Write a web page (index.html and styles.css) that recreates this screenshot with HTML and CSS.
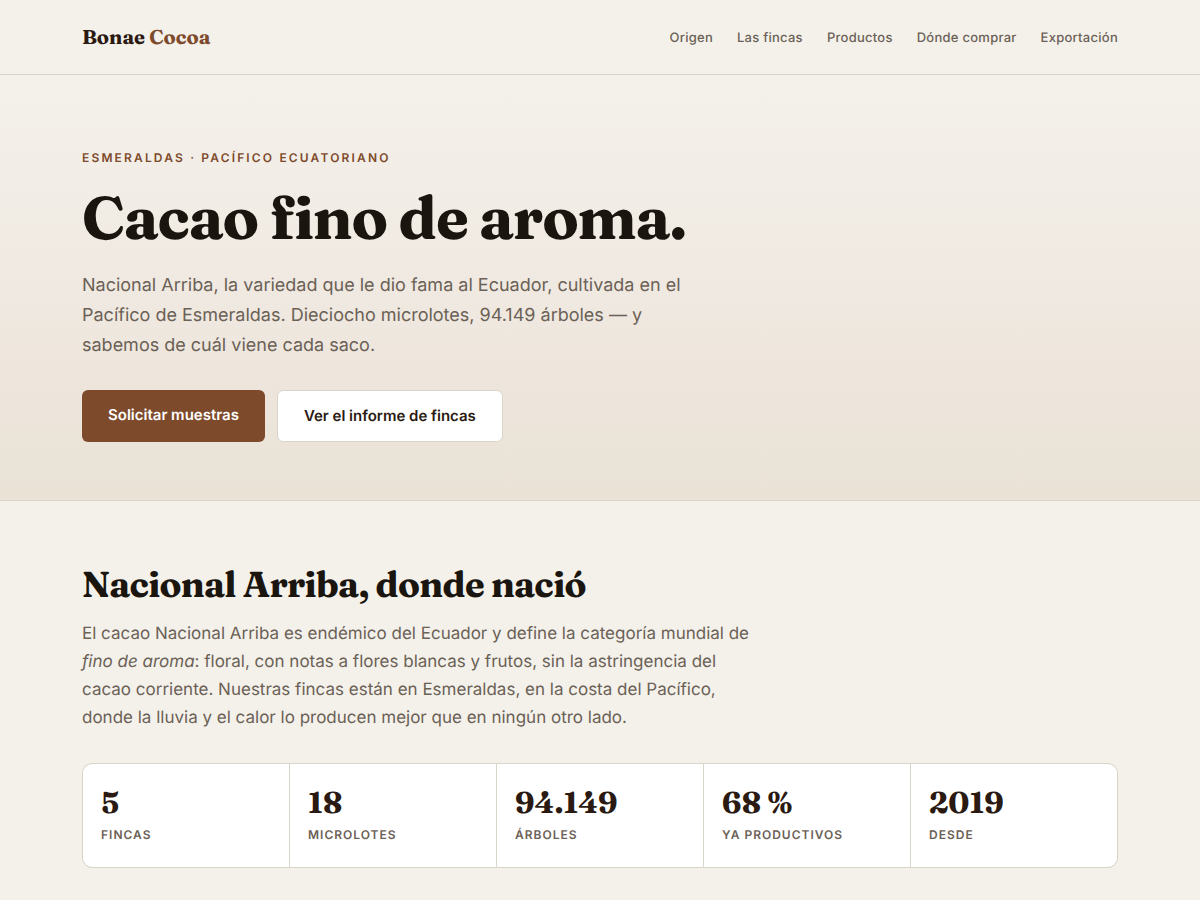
FILE: index.html
```html
<!DOCTYPE html>
<html lang="es">
<head>
<meta charset="utf-8">
<meta name="viewport" content="width=device-width, initial-scale=1">
<title>Bonae Cocoa</title>
<link rel="stylesheet" href="styles.css">
</head>
<body>
<header class="site-header">
  <div class="container header-row">
    <a class="brand" href="#inicio">Bonae <span class="brand-accent">Cocoa</span></a>
    <nav class="nav">
      <a href="#origen">Origen</a>
      <a href="#fincas">Las fincas</a>
      <a href="#productos">Productos</a>
      <a href="#comprar">Dónde comprar</a>
      <a href="#exportacion">Exportación</a>
    </nav>
  </div>
</header>
<main>
  <section class="hero" id="inicio">
    <div class="container">
      <p class="eyebrow">Esmeraldas · Pacífico ecuatoriano</p>
      <h1 class="hero-title">Cacao fino de aroma.</h1>
      <p class="hero-text">Nacional Arriba, la variedad que le dio fama al Ecuador, cultivada en el Pacífico de Esmeraldas. Dieciocho microlotes, 94.149 árboles — y sabemos de cuál viene cada saco.</p>
      <div class="actions">
        <a class="button button-primary" href="#muestras">Solicitar muestras</a>
        <a class="button button-secondary" href="#informe">Ver el informe de fincas</a>
      </div>
    </div>
  </section>
  <section class="origin" id="origen">
    <div class="container">
      <h2 class="section-title">Nacional Arriba, donde nació</h2>
      <p class="section-text">El cacao Nacional Arriba es endémico del Ecuador y define la categoría mundial de <em>fino de aroma</em>: floral, con notas a flores blancas y frutos, sin la astringencia del cacao corriente. Nuestras fincas están en Esmeraldas, en la costa del Pacífico, donde la lluvia y el calor lo producen mejor que en ningún otro lado.</p>
      <ul class="stats">
        <li class="stat"><span class="stat-value">5</span><span class="stat-label">Fincas</span></li>
        <li class="stat"><span class="stat-value">18</span><span class="stat-label">Microlotes</span></li>
        <li class="stat"><span class="stat-value">94.149</span><span class="stat-label">Árboles</span></li>
        <li class="stat"><span class="stat-value">68 %</span><span class="stat-label">Ya productivos</span></li>
        <li class="stat"><span class="stat-value">2019</span><span class="stat-label">Desde</span></li>
      </ul>
    </div>
  </section>
</main>
</body>
</html>
```
FILE: styles.css
```css
:root {
  --paper: #f4f1eb;
  --line: #d9d5c9;
  --ink: #1a150f;
  --bark: #2a1a12;
  --cocoa: #7d4a2b;
  --muted: #6b6156;
  --serif: Fraunces, "Liberation Serif", serif;
  --sans: Inter, "Liberation Sans", sans-serif;
}

* { box-sizing: border-box; }

body {
  margin: 0;
  background: var(--paper);
  color: var(--ink);
  font-family: var(--sans);
  text-rendering: geometricPrecision;
}

h1, h2, p, ul { margin: 0; padding: 0; }

a { text-decoration: none; }

.container {
  max-width: 1100px;
  margin: 0 auto;
  padding: 0 32px;
}

.site-header {
  border-bottom: 1px solid var(--line);
}

.header-row {
  display: flex;
  flex-wrap: wrap;
  align-items: center;
  justify-content: space-between;
  gap: 12px 24px;
  padding-top: 21px;
  padding-bottom: 19px;
}

.brand,
.hero-title,
.section-title,
.stat-value {
  font-family: var(--serif);
  font-weight: 700;
}

.brand {
  color: var(--bark);
  font-size: 20px;
  line-height: 34px;
}

.brand-accent { color: var(--cocoa); }

.nav {
  display: flex;
  flex-wrap: wrap;
  gap: 8px 24px;
}

.nav a {
  color: var(--muted);
  font-size: 13px;
  font-weight: 500;
  line-height: 22px;
  letter-spacing: 0.02em;
}

.hero {
  padding: 73px 0 58px;
  border-bottom: 1px solid var(--line);
  background: linear-gradient(180deg, #f4f1eb 0%, #eee6dd 70%, #e9e2d5 100%);
}

.eyebrow {
  margin-bottom: 16px;
  color: var(--cocoa);
  font-size: 12px;
  font-weight: 600;
  line-height: 20px;
  letter-spacing: 0.18em;
  text-transform: uppercase;
}

.hero-title,
.section-title { letter-spacing: -0.02em; }

.hero-title {
  margin-bottom: 19px;
  font-size: 60px;
  line-height: 68px;
}

.hero-text {
  max-width: 620px;
  margin-bottom: 29px;
  color: var(--muted);
  font-size: 18px;
  line-height: 30px;
}

.actions {
  display: flex;
  flex-wrap: wrap;
  gap: 12px;
}

.button {
  padding: 13px 26px;
  border-radius: 6px;
  font-size: 15px;
  font-weight: 600;
  line-height: 24px;
}

.button-primary {
  background: var(--cocoa);
  color: #fff;
}

.button-secondary {
  border: 1px solid var(--line);
  background: #fff;
  color: var(--bark);
}

.origin { padding: 61px 0 64px; }

.section-title {
  margin-bottom: 12px;
  font-size: 36px;
  line-height: 46px;
}

.section-text {
  max-width: 680px;
  margin-bottom: 31px;
  color: var(--muted);
  font-size: 17px;
  line-height: 28px;
}

.stats {
  display: grid;
  grid-template-columns: repeat(auto-fit, minmax(180px, 1fr));
  gap: 1px;
  overflow: hidden;
  border: 1px solid var(--line);
  border-radius: 10px;
  background: var(--line);
  list-style: none;
}

.stat {
  display: flex;
  flex-direction: column;
  gap: 4px;
  padding: 21px 18px 22px;
  background: #fff;
}

.stat-value {
  color: var(--bark);
  font-size: 30px;
  line-height: 36px;
}

.stat-label {
  color: var(--muted);
  font-size: 12px;
  font-weight: 600;
  line-height: 20px;
  letter-spacing: 1px;
  text-transform: uppercase;
}
```
